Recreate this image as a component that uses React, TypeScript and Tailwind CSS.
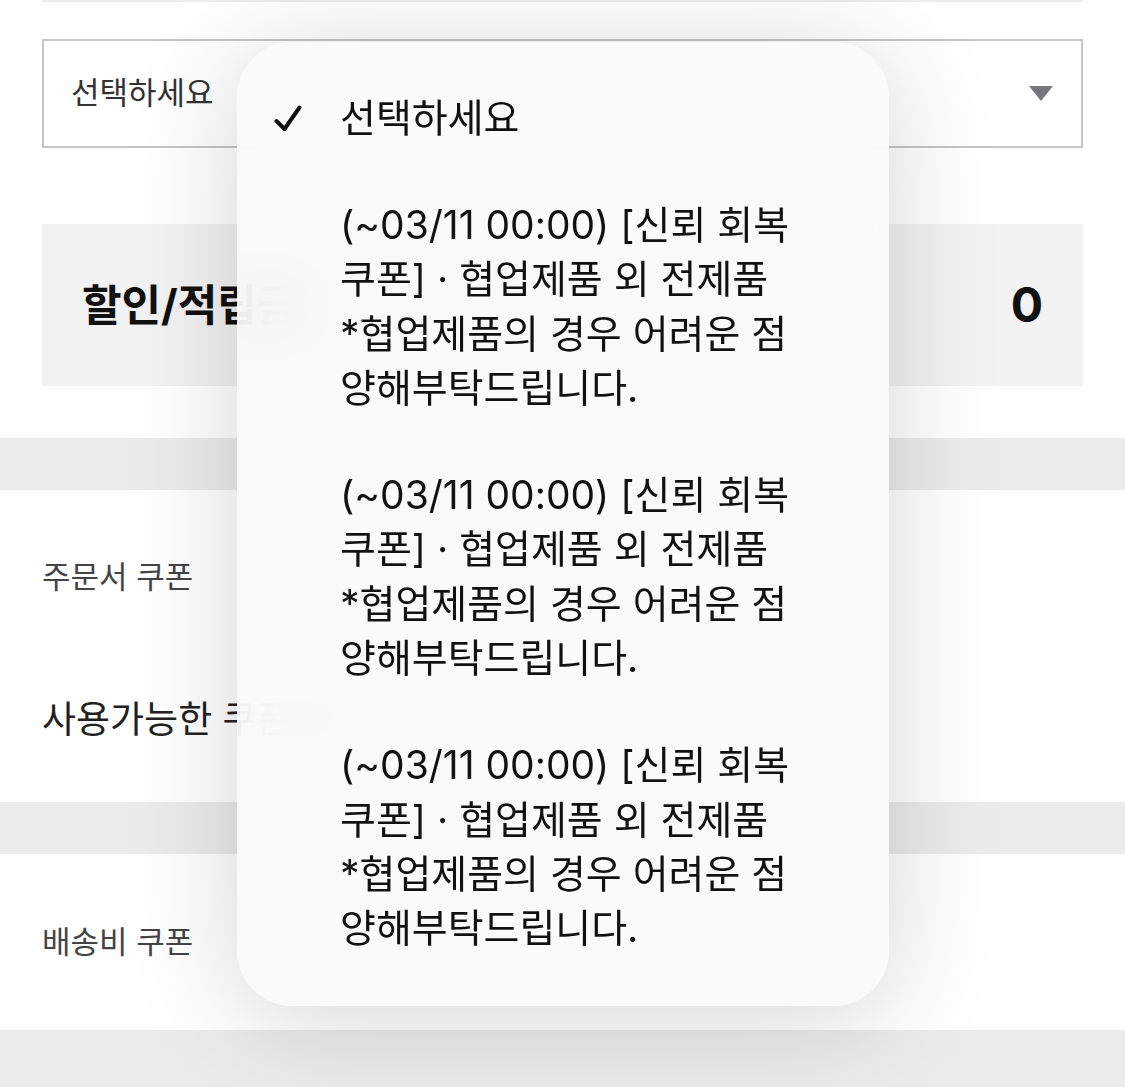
import { useState } from "react";

const options = [
  ["(~03/11 00:00) [신뢰 회복", "쿠폰] · 협업제품 외 전제품", "*협업제품의 경우 어려운 점", "양해부탁드립니다."],
  ["(~03/11 00:00) [신뢰 회복", "쿠폰] · 협업제품 외 전제품", "*협업제품의 경우 어려운 점", "양해부탁드립니다."],
  ["(~03/11 00:00) [신뢰 회복", "쿠폰] · 협업제품 외 전제품", "*협업제품의 경우 어려운 점", "양해부탁드립니다."],
];

export default function App() {
  const [selected] = useState(0);

  return (
    <div
      className="relative h-[1087px] w-[1125px] overflow-hidden bg-white"
      style={{ fontFamily: 'Inter, "Noto Sans CJK KR", "Noto Sans", sans-serif' }}
    >
      {/* previous field edge */}
      <div className="mx-[42px] h-[2px] bg-[#ececec]" />

      {/* select box */}
      <div className="mx-[42px] mt-[37px] flex h-[109px] items-center justify-between border-2 border-[#c6c6c6] pl-[27px] pr-[28px]">
        <span className="text-[31px] text-[#333]">선택하세요</span>
        <svg width="24" height="16" viewBox="0 0 24 16">
          <path d="M0 0 L24 0 L12 15 Z" fill="#76767c" />
        </svg>
      </div>

      {/* points box */}
      <div className="mx-[42px] mt-[76px] flex h-[162px] items-center justify-between bg-[#f2f2f2] px-[40px]">
        <span className="text-[43px] font-bold text-[#111]">할인/적립금</span>
        <span className="text-[48px] font-bold text-[#111]">0</span>
      </div>

      <div className="mt-[52px] h-[52px] bg-[#ebebeb]" />

      {/* order coupon */}
      <div className="flex h-[312px] flex-col px-[42px] pt-[67px]">
        <div className="text-[31px] leading-[40px] text-[#444]">주문서 쿠폰</div>
        <div className="mt-[99px] text-[37px] leading-[48px] text-[#222]">사용가능한 쿠폰 0장</div>
      </div>

      <div className="h-[52px] bg-[#ebebeb]" />

      <div className="flex h-[176px] items-center px-[42px] text-[31px] text-[#444]">배송비 쿠폰</div>

      <div className="h-[60px] bg-[#ebebeb]" />

      {/* dropdown menu */}
      <div className="absolute left-[237px] top-[42px] w-[652px] rounded-[56px] bg-[#f9f9f9]/90 pb-[50px] pt-[49px] shadow-[0_12px_110px_rgba(0,0,0,0.17)] backdrop-blur-[32px]">
        <div className="flex flex-col gap-[53px] text-[#111]">
          <div className="flex items-center leading-[54px]">
            <div className="flex w-[103px] justify-end pr-[38px]">
              {selected === 0 && (
                <svg width="28" height="28" viewBox="0 0 28 28">
                  <path
                    d="M2.5 17 L10.5 25 L25.5 3.5"
                    fill="none"
                    stroke="#111"
                    strokeWidth="4"
                    strokeLinecap="round"
                    strokeLinejoin="round"
                  />
                </svg>
              )}
            </div>
            <span className="text-[39px]">선택하세요</span>
          </div>
          {options.map((lines, i) => (
            <div key={i} className="flex">
              <div className="w-[103px]" />
              <div className="flex flex-col text-[39px] leading-[54.3px]">
                {lines.map((l, j) => (
                  <span key={j} className="whitespace-nowrap">
                    {l}
                  </span>
                ))}
              </div>
            </div>
          ))}
        </div>
      </div>
    </div>
  );
}
